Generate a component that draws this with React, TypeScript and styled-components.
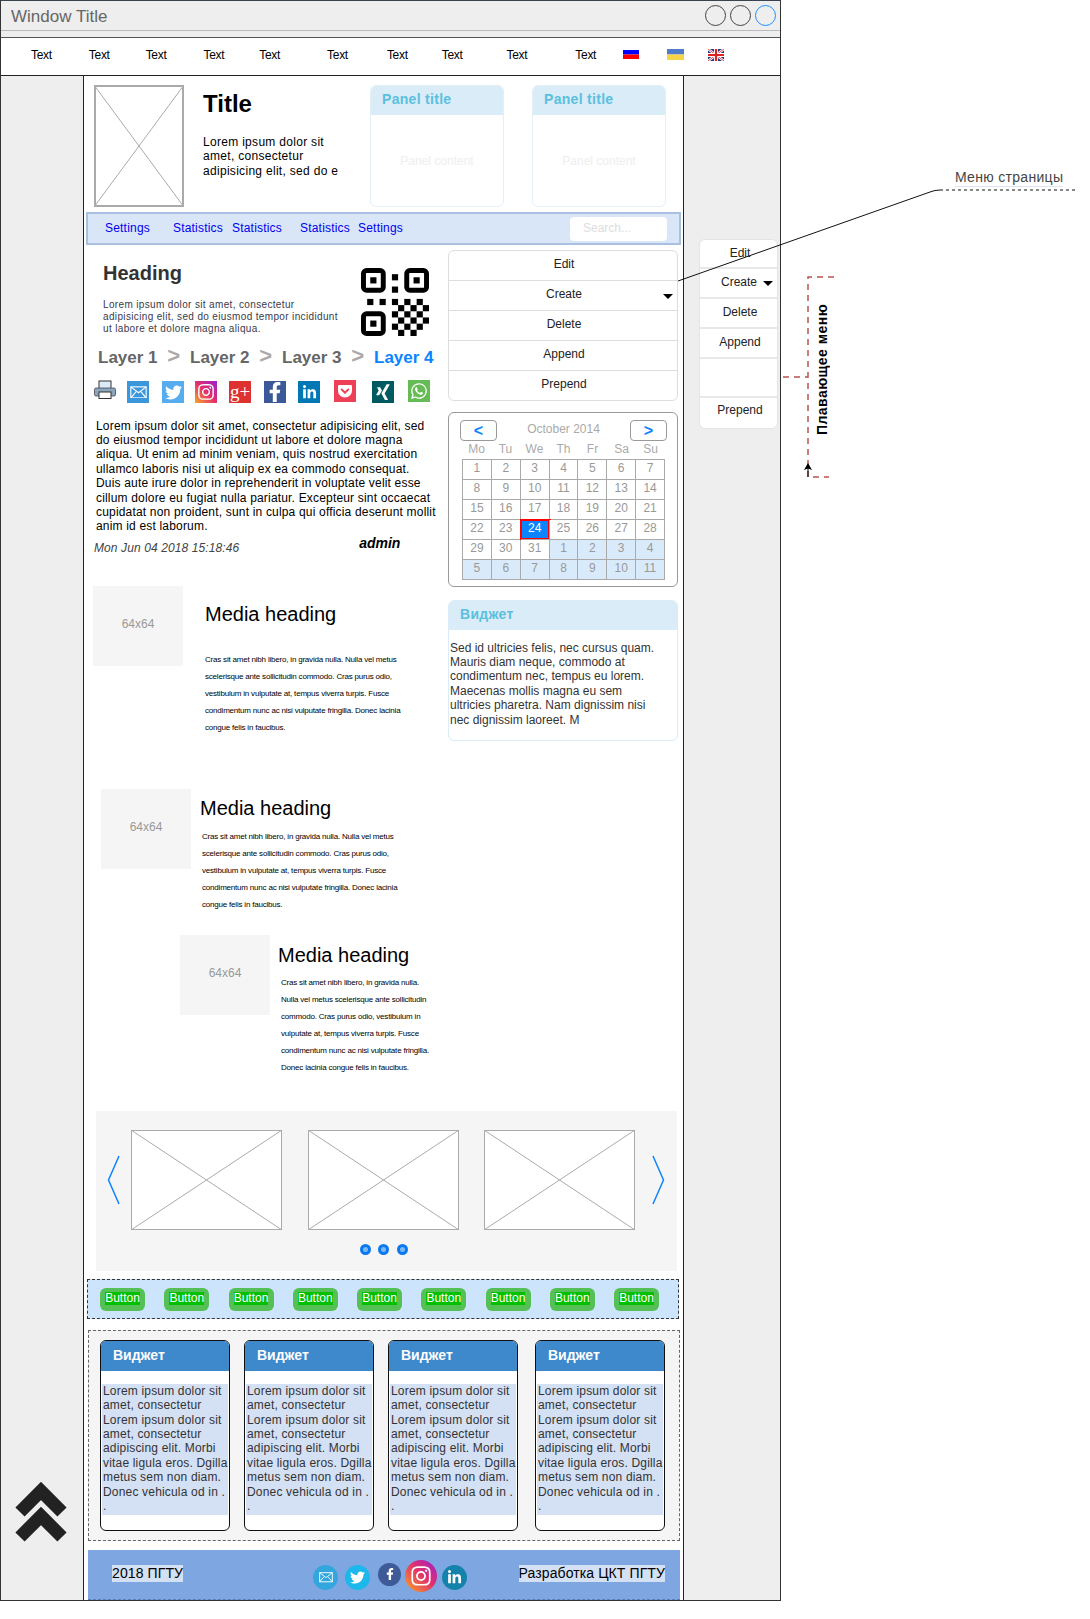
import styled, { createGlobalStyle } from 'styled-components';
import {
  FaFacebookF,
  FaGetPocket,
  FaInstagram,
  FaLinkedinIn,
  FaTwitter,
  FaWhatsapp,
  FaXing,
} from 'react-icons/fa';

const GlobalStyle = createGlobalStyle`
  html, body {
    margin: 0;
    padding: 0;
    background: #fff;
  }
  body {
    font-family: "Liberation Sans", Arial, sans-serif;
    font-size: 12px;
    color: #000;
  }
  * {
    box-sizing: border-box;
  }
`;

const Page = styled.div`
  position: relative;
  width: 1090px;
  height: 1619px;
  overflow: hidden;
`;

const Window = styled.div`
  width: 781px;
  height: 1601px;
  display: flex;
  flex-direction: column;
  background: #eee;
  border: 1px solid #333;
  border-top-color: #3a4450;
`;

const TitleBar = styled.div`
  height: 30px;
  flex: none;
  display: flex;
  align-items: center;
  padding: 2px 4px 0 10px;
  border-bottom: 1px solid #bbb;
  margin-bottom: 6px;
`;

const WindowTitle = styled.div`
  font-size: 17px;
  color: #666;
  flex: 1;
`;

const WindowButton = styled.span<{ $active?: boolean }>`
  width: 21px;
  height: 21px;
  margin: -2px 0 0 4px;
  border-radius: 50%;
  border: 1px solid ${(p) => (p.$active ? '#1e90ff' : '#444')};
`;

const TopNav = styled.div`
  height: 39px;
  flex: none;
  display: flex;
  align-items: center;
  padding: 0 0 4px 30px;
  background: #fff;
  border-top: 1px solid #555;
  border-bottom: 1px solid #222;
`;

const TopNavItem = styled.span<{ $gap: number }>`
  margin-left: ${(p) => p.$gap}px;
  font-size: 12px;
  letter-spacing: -0.3px;
`;

const Flag = styled.svg<{ $gap: number }>`
  margin-left: ${(p) => p.$gap}px;
  flex: none;
`;

const Body = styled.div`
  flex: 1;
  display: flex;
  min-height: 0;
`;

const LeftGutter = styled.div`
  width: 82px;
  flex: none;
  display: flex;
  align-items: flex-end;
  padding: 0 0 58px 14px;
`;

const Main = styled.div`
  width: 601px;
  flex: none;
  background: #fff;
  border-left: 1px solid #222;
  border-right: 1px solid #222;
  padding-top: 9px;
`;

const RightGutter = styled.div`
  flex: 1;
  padding: 163px 0 0 15px;
`;

const FloatMenu = styled.div`
  width: 79px;
  background: #fff;
  border: 1px solid #e4e4e4;
  border-radius: 6px;
`;

const FloatItem = styled.div<{ $tall?: boolean; $left?: boolean }>`
  height: ${(p) => (p.$tall ? 39 : 30)}px;
  display: flex;
  align-items: center;
  justify-content: ${(p) => (p.$left ? 'flex-start' : 'center')};
  padding: 0 0 2px ${(p) => (p.$left ? 21 : 3)}px;
  gap: 6px;
  color: #222;
  border-bottom: 2px solid #e8e8e8;
  &:first-child {
    height: 29px;
  }
  &:last-child {
    border-bottom: 0;
    padding-bottom: 6px;
  }
`;

const Caret = styled.span`
  width: 0;
  height: 0;
  margin-top: 2px;
  border-left: 5px solid transparent;
  border-right: 5px solid transparent;
  border-top: 5px solid #000;
`;

const Header = styled.div`
  display: flex;
  height: 122px;
  padding-left: 10px;
`;

const Placeholder = styled.svg`
  display: block;
  flex: none;
  background: #fff;
`;

const HeaderText = styled.div`
  width: 167px;
  flex: none;
  margin-left: 19px;
  padding-top: 4px;
`;

const PageTitle = styled.h1`
  margin: 0;
  font-size: 24px;
  line-height: 30px;
  font-weight: bold;
`;

const HeaderCopy = styled.p`
  margin: 16px 0 0;
  font-size: 12px;
  line-height: 14.4px;
  letter-spacing: 0.3px;
  width: 145px;
`;

const Panel = styled.div<{ $width: number; $gap?: number }>`
  width: ${(p) => p.$width}px;
  margin-left: ${(p) => p.$gap ?? 0}px;
  flex: none;
  border: 1px solid #e3f0f8;
  border-radius: 6px;
  background: #fff;
  overflow: hidden;
`;

const PanelTitle = styled.div`
  height: 30px;
  padding: 5px 0 0 12px;
  margin: -1px -1px 0;
  background: #d9ecf7;
  color: #5bc0de;
  font-size: 14px;
  font-weight: bold;
  line-height: 18px;
  letter-spacing: 0.3px;
`;

const PanelContent = styled.div`
  height: 91px;
  display: flex;
  align-items: center;
  justify-content: center;
  color: #eee;
`;

const LinkBar = styled.div`
  height: 33px;
  margin: 5px 2px 0;
  display: flex;
  align-items: center;
  padding: 0 0 2px 17px;
  background: #d8e6f8;
  border: 2px solid #a9c0e0;
`;

const BarLink = styled.a<{ $gap: number }>`
  margin-left: ${(p) => p.$gap}px;
  color: #0000ee;
  font-size: 12px;
  letter-spacing: 0.2px;
`;

const Search = styled.div`
  margin: 2px 12px 0 auto;
  width: 97px;
  height: 24px;
  padding-left: 13px;
  line-height: 22px;
  background: #fff;
  border-radius: 4px;
  color: #ddd;
`;

const Columns = styled.div`
  display: flex;
`;

const LeftColumn = styled.div`
  width: 364px;
  flex: none;
`;

const RightColumn = styled.div`
  width: 230px;
  flex: none;
  padding-top: 5px;
`;

const Intro = styled.div`
  display: flex;
  margin: 16px 0 0 19px;
`;

const IntroText = styled.div`
  width: 258px;
  flex: none;
`;

const Heading = styled.h2`
  margin: 0;
  font-size: 20px;
  line-height: 24px;
  font-weight: bold;
  color: #333;
`;

const IntroCopy = styled.p`
  margin: 14px 0 0;
  font-size: 10px;
  line-height: 12px;
  letter-spacing: 0.35px;
  color: #3a3a4a;
  width: 240px;
`;

const Qr = styled.svg`
  margin-top: 7px;
  flex: none;
`;

const Crumbs = styled.div`
  display: flex;
  align-items: center;
  height: 20px;
  margin: 12px 0 0 14px;
  gap: 9.8px;
`;

const Crumb = styled.span<{ $active?: boolean }>`
  font-size: 17px;
  font-weight: bold;
  color: ${(p) => (p.$active ? '#0a84ff' : '#666')};
`;

const CrumbSep = styled.span`
  font-size: 22px;
  line-height: 20px;
  font-weight: bold;
  color: #aaa;
  margin-top: -4px;
`;

const Socials = styled.div`
  display: flex;
  align-items: flex-start;
  height: 23px;
  margin: 12px 0 0 10px;
`;

const Tile = styled.span<{ $bg: string; $gap: number; $drop?: number; $size?: number }>`
  width: 22px;
  height: 22px;
  flex: none;
  display: flex;
  align-items: center;
  justify-content: center;
  margin-left: ${(p) => p.$gap}px;
  margin-top: ${(p) => p.$drop ?? 1}px;
  background: ${(p) => p.$bg};
  color: #fff;
  font-size: ${(p) => p.$size ?? 16}px;
`;

const GooglePlus = styled.span`
  font-family: "Liberation Serif", serif;
  font-size: 19px;
  line-height: 20px;
`;

const Lorem = styled.p`
  margin: 15.5px 0 0 12px;
  width: 341px;
  font-size: 12px;
  line-height: 14.4px;
  letter-spacing: 0.18px;
`;

const Meta = styled.div`
  display: flex;
  align-items: flex-start;
  margin: 2px 0 0 10px;
`;

const MetaDate = styled.span`
  margin-top: 5px;
  font-style: italic;
  line-height: 14px;
  letter-spacing: 0.1px;
  color: #444;
`;

const MetaAuthor = styled.span`
  margin-left: 120px;
  margin-top: -1px;
  font-size: 14px;
  line-height: 16px;
  font-weight: bold;
  font-style: italic;
`;

const Media = styled.div<{ $indent: number; $top: number }>`
  display: flex;
  margin: ${(p) => p.$top}px 0 0 ${(p) => p.$indent}px;
`;

const MediaThumb = styled.div`
  width: 90px;
  height: 80px;
  flex: none;
  display: flex;
  align-items: center;
  justify-content: center;
  padding-bottom: 3px;
  background: #f5f5f5;
  color: #999;
`;

const MediaBody = styled.div<{ $gap: number; $top: number }>`
  margin-left: ${(p) => p.$gap}px;
  padding-top: ${(p) => p.$top}px;
`;

const MediaHeading = styled.h4`
  margin: 0;
  font-size: 20px;
  line-height: 24px;
  font-weight: normal;
  white-space: nowrap;
`;

const MediaCopy = styled.div<{ $top: number; $shift: number }>`
  margin: ${(p) => p.$top}px 0 0 ${(p) => p.$shift}px;
`;

const MediaLine = styled.div`
  font-size: 8px;
  line-height: 17px;
  letter-spacing: -0.2px;
  white-space: nowrap;
`;

const ActionList = styled.div`
  border: 1px solid #ddd;
  border-radius: 6px;
`;

const ActionItem = styled.div`
  position: relative;
  height: 30px;
  display: flex;
  align-items: center;
  justify-content: center;
  padding: 0 0 3px 2px;
  color: #222;
  border-bottom: 1px solid #ddd;
  &:last-child {
    border-bottom: 0;
    height: 29px;
  }
`;

const ActionCaret = styled(Caret)`
  position: absolute;
  right: 4px;
  top: 11px;
`;

const Calendar = styled.div`
  margin-top: 11px;
  height: 175px;
  padding: 7px 10px 0 13px;
  border: 1px solid #999;
  border-radius: 6px;
`;

const CalendarHead = styled.div`
  display: flex;
  align-items: center;
  justify-content: space-between;
  margin: 0 0 0 -2px;
  color: #aaa;
`;

const MonthLabel = styled.span`
  margin-top: -4px;
`;

const CalendarButton = styled.span`
  width: 37px;
  height: 21px;
  display: flex;
  align-items: center;
  justify-content: center;
  border: 1px solid #999;
  border-radius: 4px;
  color: #0a84ff;
  font-size: 16px;
  font-weight: bold;
`;

const WeekDays = styled.div`
  display: grid;
  width: 203px;
  grid-template-columns: repeat(7, 1fr);
  height: 17px;
  margin-top: 1px;
  text-align: center;
  line-height: 14px;
  color: #aaa;
`;

const DayGrid = styled.div`
  display: grid;
  width: 203px;
  grid-template-columns: repeat(7, 1fr);
  grid-auto-rows: 20px;
  border-top: 1px solid #aaa;
  border-left: 1px solid #aaa;
`;

const Day = styled.div<{ $muted?: boolean; $today?: boolean }>`
  display: flex;
  align-items: center;
  justify-content: center;
  padding-bottom: 3px;
  border-right: 1px solid #aaa;
  border-bottom: 1px solid #aaa;
  background: ${(p) => (p.$today ? '#0a84ff' : p.$muted ? '#d9ebfb' : '#fff')};
  color: ${(p) => (p.$today ? '#fff' : '#999')};
  box-shadow: ${(p) => (p.$today ? '0 0 0 1px #f00, inset 0 0 0 1px #f00' : 'none')};
`;

const Widget = styled.div`
  margin-top: 13px;
  width: 230px;
  height: 141px;
  border: 1px solid #d9ecf7;
  border-radius: 6px;
  overflow: hidden;
`;

const WidgetCopy = styled.p`
  margin: 10.5px 0 0 1px;
  font-size: 12px;
  line-height: 14.4px;
  color: #333;
  width: 214px;
`;

const Carousel = styled.div`
  width: 581px;
  height: 160px;
  margin: 35px 0 0 12px;
  padding-top: 19px;
  background: #f5f5f5;
`;

const Slides = styled.div`
  display: flex;
  align-items: center;
  padding-left: 11px;
`;

const SlideTrack = styled.div`
  display: flex;
  gap: 25.5px;
  margin: 0 16px 0 10px;
`;

const Dots = styled.div`
  display: flex;
  justify-content: center;
  gap: 7.5px;
  margin: 14px 0 0 -6px;
`;

const Dot = styled.span`
  width: 11px;
  height: 11px;
  border-radius: 50%;
  background: #7db9f5;
  border: 3px solid #0a78f0;
`;

const ButtonBand = styled.div`
  width: 592px;
  height: 40px;
  margin: 8px 0 0 3px;
  display: flex;
  justify-content: space-between;
  padding: 8px 19px 0 12px;
  background: #cce5fd;
  border: 1px dashed #333;
`;

const GreenButton = styled.div`
  width: 45px;
  height: 23px;
  display: flex;
  align-items: center;
  justify-content: center;
  padding-bottom: 2px;
  background: #55c055;
  border-radius: 6px;
`;

const GreenLabel = styled.span`
  background: #00c000;
  color: #fff;
  font-size: 12px;
  line-height: 13px;
`;

const CardGroup = styled.div`
  width: 592px;
  height: 211px;
  margin: 11px 0 0 4px;
  display: flex;
  padding: 9px 0 0 11px;
  background: #f5f5f5;
  border: 1px dashed #666;
`;

const Card = styled.div<{ $gap: number }>`
  width: 130px;
  height: 191px;
  margin-left: ${(p) => p.$gap}px;
  background: #fff;
  border: 1px solid #111;
  border-radius: 6px;
  overflow: hidden;
`;

const CardTitle = styled.div`
  height: 30px;
  padding: 5px 0 0 12px;
  background: #3d89cb;
  color: #fff;
  font-size: 14px;
  font-weight: bold;
  line-height: 18px;
`;

const CardCopy = styled.div`
  margin: 13px 1px 0;
  height: 131px;
  padding: 0 0 0 1px;
  background: #d4e0f3;
  color: #333;
  line-height: 14.4px;
  letter-spacing: 0.18px;
  white-space: nowrap;
`;

const Footer = styled.div`
  width: 592px;
  height: 50px;
  margin: 9px 0 0 4px;
  display: flex;
  align-items: flex-start;
  padding: 10px 15px 0 24px;
  background: #7ea6e0;
  border-bottom: 1px dashed #5a7fb8;
`;

const FooterText = styled.span<{ $push?: boolean }>`
  margin-left: ${(p) => (p.$push ? 'auto' : '0')};
  margin-top: 5px;
  background: #d4e0f3;
  font-size: 14px;
  line-height: 17px;
  letter-spacing: 0.1px;
`;

const FooterIcons = styled.div`
  display: flex;
  align-items: flex-start;
  margin-left: 130px;
`;

const FooterIcon = styled.span<{
  $bg: string;
  $size: number;
  $gap: number;
  $drop: number;
  $glyph?: number;
}>`
  width: ${(p) => p.$size}px;
  height: ${(p) => p.$size}px;
  margin-left: ${(p) => p.$gap}px;
  margin-top: ${(p) => p.$drop}px;
  flex: none;
  display: flex;
  align-items: center;
  justify-content: center;
  border-radius: 50%;
  background: ${(p) => p.$bg};
  color: #fff;
  font-size: ${(p) => p.$glyph ?? 14}px;
`;

/* notes drawn around the window, they sit on the free part of the canvas */
const Callouts = styled.svg`
  position: absolute;
  left: 0;
  top: 0;
  pointer-events: none;
`;

const MenuNote = styled.div`
  position: absolute;
  left: 955px;
  top: 169px;
  font-size: 14px;
  line-height: 17px;
  letter-spacing: 0.3px;
  color: #444;
  border-bottom: 1px solid #dce4f2;
`;

const FloatNote = styled.div`
  position: absolute;
  left: 814px;
  top: 306px;
  height: 129px;
  writing-mode: vertical-rl;
  transform: rotate(180deg);
  font-size: 14px;
  line-height: 16px;
  font-weight: bold;
  white-space: nowrap;
  letter-spacing: 0.45px;
`;

const Cross = ({ w, h, sw = 1 }: { w: number; h: number; sw?: number }) => (
  <Placeholder width={w} height={h} viewBox={`0 0 ${w} ${h}`}>
    <rect x={sw / 2} y={sw / 2} width={w - sw} height={h - sw} fill="#fff" stroke="#aaa" strokeWidth={sw} />
    <path d={`M0 0L${w} ${h}M${w} 0L0 ${h}`} stroke="#aaa" strokeWidth="1" />
  </Placeholder>
);

const topNavGaps = [0, 37, 36, 37, 35, 47, 39, 34, 44, 48];

const barLinks = [
  { label: 'Settings', gap: 0 },
  { label: 'Statistics', gap: 23 },
  { label: 'Statistics', gap: 9 },
  { label: 'Statistics', gap: 18 },
  { label: 'Settings', gap: 8 },
];

const qrFinders = [
  [0, 0],
  [7, 0],
  [0, 7],
];

const qrCells = [
  [5, 1],
  [5, 3],
  [1, 5],
  [3, 5],
  [5, 5], [7, 5], [9, 5],
  [6, 6], [8, 6], [10, 6],
  [5, 7], [7, 7], [9, 7],
  [6, 8], [8, 8], [10, 8],
  [5, 9], [7, 9], [9, 9],
  [6, 10], [8, 10],
];

const media1 = [
  'Cras sit amet nibh libero, in gravida nulla. Nulla vel metus',
  'scelerisque ante sollicitudin commodo. Cras purus odio,',
  'vestibulum in vulputate at, tempus viverra turpis. Fusce',
  'condimentum nunc ac nisi vulputate fringilla. Donec lacinia',
  'congue felis in faucibus.',
];

const media3 = [
  'Cras sit amet nibh libero, in gravida nulla.',
  'Nulla vel metus scelerisque ante sollicitudin',
  'commodo. Cras purus odio, vestibulum in',
  'vulputate at, tempus viverra turpis. Fusce',
  'condimentum nunc ac nisi vulputate fringilla.',
  'Donec lacinia congue felis in faucibus.',
];

const days = [
  1, 2, 3, 4, 5, 6, 7, 8, 9, 10, 11, 12, 13, 14, 15, 16, 17, 18, 19, 20, 21, 22, 23, 24, 25, 26, 27, 28, 29, 30, 31,
  1, 2, 3, 4, 5, 6, 7, 8, 9, 10, 11,
];

const cardLines = [
  'Lorem ipsum dolor sit',
  'amet, consectetur',
  'Lorem ipsum dolor sit',
  'amet, consectetur',
  'adipiscing elit. Morbi',
  'vitae ligula eros. Dgilla',
  'metus sem non diam.',
  'Donec vehicula od in .',
  '.',
];

const MailGlyph = ({ size }: { size: number }) => (
  <svg width={size} height={size * 0.75} viewBox="0 0 20 15" fill="none" stroke="#fff" strokeWidth="1.3">
    <rect x="1" y="1" width="18" height="13" />
    <path d="M1 1l9 7 9-7M1 14l6-7M19 14l-6-7" />
  </svg>
);

export default function App() {
  return (
    <Page>
      <GlobalStyle />
      <Window>
        <TitleBar>
          <WindowTitle>Window Title</WindowTitle>
          <WindowButton />
          <WindowButton />
          <WindowButton $active />
        </TitleBar>
        <TopNav>
          {topNavGaps.map((gap, i) => (
            <TopNavItem key={i} $gap={gap}>
              Text
            </TopNavItem>
          ))}
          <Flag $gap={27} width="16" height="9" viewBox="0 0 16 9">
            <rect width="16" height="4.5" fill="#00f" />
            <rect y="4.5" width="16" height="4.5" fill="#f00" />
          </Flag>
          <Flag $gap={28} width="17" height="11" viewBox="0 0 17 11">
            <rect width="17" height="5.5" fill="#4f7cc9" />
            <rect y="5.5" width="17" height="5.5" fill="#f5d547" />
          </Flag>
          <Flag $gap={24} width="16" height="12" viewBox="0 0 16 12">
            <rect width="16" height="12" fill="#2a3a80" />
            <path d="M0 0L16 12M16 0L0 12" stroke="#fff" strokeWidth="2.4" />
            <path d="M0 0L16 12M16 0L0 12" stroke="#d22" strokeWidth="0.8" />
            <path d="M8 0V12M0 6H16" stroke="#fff" strokeWidth="4" />
            <path d="M8 0V12M0 6H16" stroke="#d22" strokeWidth="2.2" />
          </Flag>
        </TopNav>
        <Body>
          <LeftGutter>
            <svg width="52" height="60" viewBox="0 0 52 60" fill="none" stroke="#222" strokeWidth="13">
              <path d="M5 30L26 9L47 30" />
              <path d="M5 55L26 34L47 55" />
            </svg>
          </LeftGutter>
          <Main>
            <Header>
              <Cross w={90} h={122} sw={2} />
              <HeaderText>
                <PageTitle>Title</PageTitle>
                <HeaderCopy>Lorem ipsum dolor sit amet, consectetur adipisicing elit, sed do e</HeaderCopy>
              </HeaderText>
              <Panel $width={134}>
                <PanelTitle>Panel title</PanelTitle>
                <PanelContent>Panel content</PanelContent>
              </Panel>
              <Panel $width={134} $gap={28}>
                <PanelTitle>Panel title</PanelTitle>
                <PanelContent>Panel content</PanelContent>
              </Panel>
            </Header>
            <LinkBar>
              {barLinks.map((link, i) => (
                <BarLink key={i} $gap={link.gap}>
                  {link.label}
                </BarLink>
              ))}
              <Search>Search...</Search>
            </LinkBar>
            <Columns>
              <LeftColumn>
                <Intro>
                  <IntroText>
                    <Heading>Heading</Heading>
                    <IntroCopy>
                      Lorem ipsum dolor sit amet, consectetur adipisicing elit, sed do eiusmod tempor incididunt ut
                      labore et dolore magna aliqua.
                    </IntroCopy>
                  </IntroText>
                  <Qr width="68" height="68" viewBox="0 0 11 11">
                    {qrFinders.map(([x, y]) => (
                      <g key={`${x}-${y}`}>
                        <rect x={x + 0.4} y={y + 0.4} width="3.2" height="3.2" rx="0.5" fill="#fff" stroke="#000" strokeWidth="0.8" />
                        <rect x={x + 1.5} y={y + 1.5} width="1" height="1" fill="#000" />
                      </g>
                    ))}
                    {qrCells.map(([x, y]) => (
                      <rect key={`${x}-${y}`} x={x} y={y} width="1" height="1" fill="#000" />
                    ))}
                  </Qr>
                </Intro>
                <Crumbs>
                  <Crumb>Layer 1</Crumb>
                  <CrumbSep>&gt;</CrumbSep>
                  <Crumb>Layer 2</Crumb>
                  <CrumbSep>&gt;</CrumbSep>
                  <Crumb>Layer 3</Crumb>
                  <CrumbSep>&gt;</CrumbSep>
                  <Crumb $active>Layer 4</Crumb>
                </Crumbs>
                <Socials>
                  <svg width="22" height="20" viewBox="0 0 22 20">
                    <rect x="5" y="1" width="12" height="9" fill="#dcecf7" stroke="#333" strokeWidth="1" />
                    <rect x="0.5" y="8" width="21" height="8" rx="1.5" fill="#8ba5bd" stroke="#445" strokeWidth="0.8" />
                    <rect x="5" y="12" width="12" height="6.5" fill="#fff" stroke="#333" strokeWidth="1" />
                  </svg>
                  <Tile $bg="#3b97dc" $gap={11}>
                    <MailGlyph size={17} />
                  </Tile>
                  <Tile $bg="#55acee" $gap={13} $size={17}>
                    <FaTwitter />
                  </Tile>
                  <Tile $bg="linear-gradient(45deg, #f9a825 0%, #e1306c 50%, #9b1fd0 100%)" $gap={11} $size={18}>
                    <FaInstagram />
                  </Tile>
                  <Tile $bg="#e03131" $gap={12}>
                    <GooglePlus>g+</GooglePlus>
                  </Tile>
                  <Tile $bg="#3b5998" $gap={13} $size={20}>
                    <FaFacebookF />
                  </Tile>
                  <Tile $bg="#0177b5" $gap={12} $size={15}>
                    <FaLinkedinIn />
                  </Tile>
                  <Tile $bg="#ee4056" $gap={14} $drop={0} $size={16}>
                    <FaGetPocket />
                  </Tile>
                  <Tile $bg="#005a5f" $gap={16} $size={18}>
                    <FaXing />
                  </Tile>
                  <Tile $bg="#65bc54" $gap={14} $drop={0} $size={18}>
                    <FaWhatsapp />
                  </Tile>
                </Socials>
                <Lorem>
                  Lorem ipsum dolor sit amet, consectetur adipisicing elit, sed do eiusmod tempor incididunt ut labore
                  et dolore magna aliqua. Ut enim ad minim veniam, quis nostrud exercitation ullamco laboris nisi ut
                  aliquip ex ea commodo consequat. Duis aute irure dolor in reprehenderit in voluptate velit esse
                  cillum dolore eu fugiat nulla pariatur. Excepteur sint occaecat cupidatat non proident, sunt in culpa
                  qui officia deserunt mollit anim id est laborum.
                </Lorem>
                <Meta>
                  <MetaDate>Mon Jun 04 2018 15:18:46</MetaDate>
                  <MetaAuthor>admin</MetaAuthor>
                </Meta>
                <Media $indent={9} $top={31}>
                  <MediaThumb>64x64</MediaThumb>
                  <MediaBody $gap={22} $top={16}>
                    <MediaHeading>Media heading</MediaHeading>
                    <MediaCopy $top={25} $shift={0}>
                      {media1.map((line) => (
                        <MediaLine key={line}>{line}</MediaLine>
                      ))}
                    </MediaCopy>
                  </MediaBody>
                </Media>
                <Media $indent={17} $top={53}>
                  <MediaThumb>64x64</MediaThumb>
                  <MediaBody $gap={9} $top={7}>
                    <MediaHeading>Media heading</MediaHeading>
                    <MediaCopy $top={8} $shift={2}>
                      {media1.map((line) => (
                        <MediaLine key={line}>{line}</MediaLine>
                      ))}
                    </MediaCopy>
                  </MediaBody>
                </Media>
                <Media $indent={96} $top={22}>
                  <MediaThumb>64x64</MediaThumb>
                  <MediaBody $gap={8} $top={8}>
                    <MediaHeading>Media heading</MediaHeading>
                    <MediaCopy $top={7} $shift={3}>
                      {media3.map((line) => (
                        <MediaLine key={line}>{line}</MediaLine>
                      ))}
                    </MediaCopy>
                  </MediaBody>
                </Media>
              </LeftColumn>
              <RightColumn>
                <ActionList>
                  <ActionItem>Edit</ActionItem>
                  <ActionItem>
                    Create
                    <ActionCaret />
                  </ActionItem>
                  <ActionItem>Delete</ActionItem>
                  <ActionItem>Append</ActionItem>
                  <ActionItem>Prepend</ActionItem>
                </ActionList>
                <Calendar>
                  <CalendarHead>
                    <CalendarButton>&lt;</CalendarButton>
                    <MonthLabel>October 2014</MonthLabel>
                    <CalendarButton>&gt;</CalendarButton>
                  </CalendarHead>
                  <WeekDays>
                    {['Mo', 'Tu', 'We', 'Th', 'Fr', 'Sa', 'Su'].map((d) => (
                      <span key={d}>{d}</span>
                    ))}
                  </WeekDays>
                  <DayGrid>
                    {days.map((d, i) => (
                      <Day key={i} $muted={i > 30} $today={i === 23}>
                        {d}
                      </Day>
                    ))}
                  </DayGrid>
                </Calendar>
                <Widget>
                  <PanelTitle>Виджет</PanelTitle>
                  <WidgetCopy>
                    Sed id ultricies felis, nec cursus quam. Mauris diam neque, commodo at condimentum nec, tempus eu
                    lorem. Maecenas mollis magna eu sem ultricies pharetra. Nam dignissim nisi nec dignissim laoreet. M
                  </WidgetCopy>
                </Widget>
              </RightColumn>
            </Columns>
            <Carousel>
              <Slides>
                <svg width="14" height="50" viewBox="0 0 14 50" fill="none" stroke="#0a84ff" strokeWidth="1.5">
                  <path d="M12 1L1.5 25L12 49" />
                </svg>
                <SlideTrack>
                  <Cross w={151} h={100} />
                  <Cross w={151} h={100} />
                  <Cross w={151} h={100} />
                </SlideTrack>
                <svg width="14" height="50" viewBox="0 0 14 50" fill="none" stroke="#0a84ff" strokeWidth="1.5">
                  <path d="M2 1L12.5 25L2 49" />
                </svg>
              </Slides>
              <Dots>
                <Dot />
                <Dot />
                <Dot />
              </Dots>
            </Carousel>
            <ButtonBand>
              {Array.from({ length: 9 }, (_, i) => (
                <GreenButton key={i}>
                  <GreenLabel>Button</GreenLabel>
                </GreenButton>
              ))}
            </ButtonBand>
            <CardGroup>
              {[0, 14, 14, 17].map((gap, i) => (
                <Card key={i} $gap={gap}>
                  <CardTitle>Виджет</CardTitle>
                  <CardCopy>
                    {cardLines.map((line, j) => (
                      <div key={j}>{line}</div>
                    ))}
                  </CardCopy>
                </Card>
              ))}
            </CardGroup>
            <Footer>
              <FooterText>2018 ПГТУ</FooterText>
              <FooterIcons>
                <FooterIcon $bg="#33a7dd" $size={25} $gap={0} $drop={5}>
                  <MailGlyph size={14} />
                </FooterIcon>
                <FooterIcon $bg="#1cb7eb" $size={25} $gap={7} $drop={5} $glyph={15}>
                  <FaTwitter />
                </FooterIcon>
                <FooterIcon $bg="#3e5b98" $size={23} $gap={8} $drop={3} $glyph={12}>
                  <FaFacebookF />
                </FooterIcon>
                <FooterIcon
                  $bg="linear-gradient(45deg, #f9a825 0%, #e1306c 55%, #9b1fd0 100%)"
                  $size={32}
                  $gap={4}
                  $drop={0}
                  $glyph={22}
                >
                  <FaInstagram />
                </FooterIcon>
                <FooterIcon $bg="#1483ab" $size={25} $gap={5} $drop={5} $glyph={15}>
                  <FaLinkedinIn />
                </FooterIcon>
              </FooterIcons>
              <FooterText $push>Разработка ЦКТ ПГТУ</FooterText>
            </Footer>
          </Main>
          <RightGutter>
            <FloatMenu>
              <FloatItem>Edit</FloatItem>
              <FloatItem $left>
                Create
                <Caret />
              </FloatItem>
              <FloatItem>Delete</FloatItem>
              <FloatItem>Append</FloatItem>
              <FloatItem $tall />
              <FloatItem>Prepend</FloatItem>
            </FloatMenu>
          </RightGutter>
        </Body>
      </Window>
      <Callouts width="1090" height="1619" viewBox="0 0 1090 1619" fill="none">
        <path d="M678 281L930 192Q935 190 940 190" stroke="#111" strokeWidth="1" />
        <path d="M940 190H1078" stroke="#111" strokeWidth="1" strokeDasharray="3 3" />
        <path
          d="M834 277H808V477H829M783 377H808"
          stroke="#b85450"
          strokeWidth="1.5"
          strokeDasharray="6 5"
        />
        <path d="M808 477V465" stroke="#000" strokeWidth="1" />
        <path d="M808 463L804 470L808 468.5L812 470Z" fill="#000" />
      </Callouts>
      <MenuNote>Меню страницы</MenuNote>
      <FloatNote>Плавающее меню</FloatNote>
    </Page>
  );
}
